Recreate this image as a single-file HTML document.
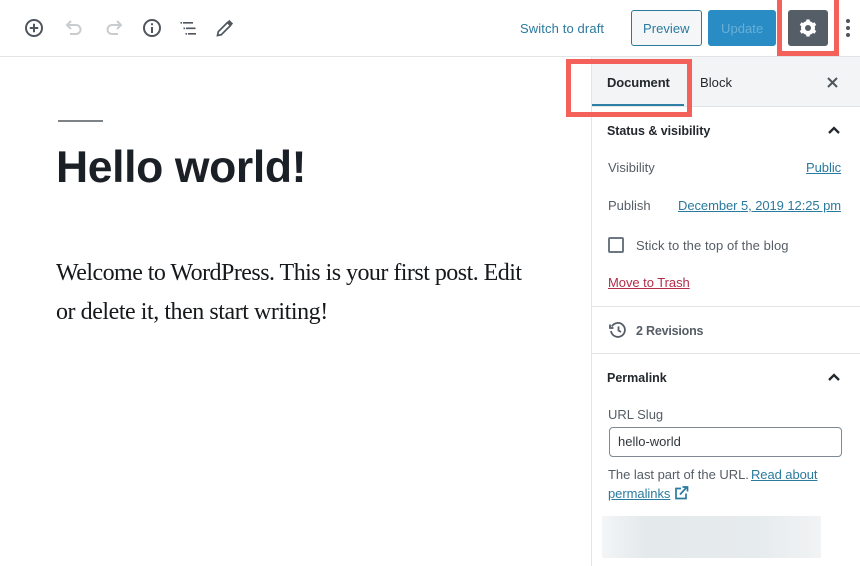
<!DOCTYPE html>
<html><head><meta charset="utf-8">
<style>
html,body{margin:0;padding:0;background:#fff}
#p{position:relative;width:860px;height:566px;overflow:hidden;background:#fff;font-family:"Liberation Sans",sans-serif;font-size:13px;color:#555d66;filter:blur(.3px)}
#p>*{position:absolute}
.t{white-space:nowrap;line-height:16px}
.b{font-weight:bold;color:#23282d}
.l{color:#2a7a9e;text-decoration:underline}
.box{box-sizing:border-box;border:5px solid #f4605a}
svg{overflow:visible}
</style></head><body>
<div id="p">
<div style="left:0;top:56px;width:860px;height:1px;background:#e2e4e7"></div>

<svg style="left:24px;top:18px" width="20" height="20" viewBox="0 0 20 20" fill="none" stroke="#4f565d" stroke-width="2"><circle cx="10" cy="10" r="8"/><path d="M10 5.800v8.400M5.800 10h8.400"/></svg>
<svg style="left:65px;top:20px" width="18" height="16" viewBox="0 0 18 16" fill="none" stroke="#c9cccf" stroke-width="2"><path d="M6 1L2 5l4 4M2 5h9a4.500 4.500 0 0 1 0 9H5"/></svg>
<svg style="left:105px;top:20px" width="18" height="16" viewBox="0 0 18 16" fill="none" stroke="#c9cccf" stroke-width="2"><path d="M12 1l4 4-4 4M16 5H7a4.500 4.500 0 0 0 0 9h6"/></svg>
<svg style="left:142px;top:18px" width="20" height="20" viewBox="0 0 20 20" fill="none" stroke="#4f565d" stroke-width="2"><circle cx="10" cy="10" r="8"/><path d="M10 9v6M10 5.200v2"/></svg>
<svg style="left:180px;top:21px" width="17" height="15" viewBox="0 0 17 15" fill="none" stroke="#4f565d" stroke-width="1.600"><path d="M0.500 1.800h1.500M3 1.800h10M3.500 7.300H5M6 7.300h9.500M5.500 12.800H7M8 12.800h8"/></svg>
<svg style="left:216px;top:20px" width="17" height="17" viewBox="0 0 17 17" fill="none" stroke="#4f565d" stroke-width="1.700"><path d="M1.500 15.500l.8-3.800L11.500 2.500l3 3-9.200 9.200z"/><path d="M12.500 .8l3.700 3.700" stroke-width="2.500"/></svg>

<span class="t" style="left:520px;top:21px;color:#2a7a9e;font-size:13px;letter-spacing:.12px">Switch to draft</span>
<div style="left:631px;top:10px;width:71px;height:36px;box-sizing:border-box;border:1px solid #2a7a9e;border-radius:3px;background:#f4f6f7"></div>
<span class="t" style="left:643px;top:21px;color:#2a7a9e;letter-spacing:.05px">Preview</span>
<div style="left:708px;top:10px;width:68px;height:36px;border-radius:3px;background:#2a8cc4"></div>
<span class="t" style="left:721px;top:21px;color:#66b0d8;letter-spacing:.05px">Update</span>
<div style="left:788px;top:10px;width:40px;height:36px;border-radius:3px;background:#555d66"></div>
<svg style="left:798px;top:18px" width="20" height="20" viewBox="0 0 20 20"><circle cx="10" cy="10" r="5.200" fill="none" stroke="#fff" stroke-width="3.600"/><path d="M10 1.500v17M2.600 5.700l14.800 8.600M2.600 14.300l14.800-8.600" stroke="#fff" stroke-width="3.400"/><circle cx="10" cy="10" r="3" fill="#555d66"/></svg>
<div class="box" style="left:777px;top:-6px;width:62px;height:62px"></div>
<svg style="left:844px;top:18px" width="8" height="20"><circle cx="4" cy="3" r="2" fill="#4f565d"/><circle cx="4" cy="10" r="2" fill="#4f565d"/><circle cx="4" cy="17" r="2" fill="#4f565d"/></svg>

<div style="left:58px;top:120px;width:45px;height:2px;background:#7e8387"></div>
<span class="t" style="left:56px;top:141px;font-size:44.500px;line-height:54px;font-weight:bold;color:#1b2026;letter-spacing:-.38px">Hello world!</span>
<span class="t" style="left:56px;top:258px;font-family:'Liberation Serif',serif;font-size:24px;line-height:30px;color:#16191c;letter-spacing:-.53px">Welcome to WordPress. This is your first post. Edit</span>
<span class="t" style="left:56px;top:297px;font-family:'Liberation Serif',serif;font-size:24px;line-height:30px;color:#16191c;letter-spacing:-.45px">or delete it, then start writing!</span>

<div style="left:591px;top:57px;width:1px;height:509px;background:#e2e4e7"></div>
<div style="left:592px;top:57px;width:268px;height:49px;background:#f3f4f5"></div>
<div style="left:592px;top:106px;width:268px;height:1px;background:#e2e4e7"></div>
<div style="left:592px;top:104px;width:92px;height:2px;background:#2e7ea6"></div>
<span class="t b" style="left:607px;top:75px;letter-spacing:-.1px">Document</span>
<span class="t" style="left:700px;top:75px;color:#23282d;letter-spacing:.05px">Block</span>
<svg style="left:827px;top:77px" width="11" height="11" fill="none" stroke="#4f565d" stroke-width="2"><path d="M1 1l9 9M10 1l-9 9"/></svg>
<div class="box" style="left:566px;top:59px;width:126px;height:58px"></div>

<span class="t b" style="left:607px;top:123px;font-size:12.500px;letter-spacing:-.05px">Status &amp; visibility</span>
<svg class="c" style="left:828px;top:126px" width="12" height="8" fill="none" stroke="#23282d" stroke-width="2.300"><path d="M1 7l5-5 5 5"/></svg>
<span class="t" style="left:608px;top:160px">Visibility</span>
<span class="t l" style="left:806px;top:160px;letter-spacing:-.05px">Public</span>
<span class="t" style="left:608px;top:198px">Publish</span>
<span class="t l" style="left:678px;top:198px;letter-spacing:-.07px">December 5, 2019 12:25 pm</span>
<div style="left:608px;top:237px;width:16px;height:16px;box-sizing:border-box;border:2px solid #6c7781;border-radius:2px"></div>
<span class="t" style="left:636px;top:238px;letter-spacing:.08px">Stick to the top of the blog</span>
<span class="t" style="left:608px;top:275px;color:#b32d4a;text-decoration:underline;letter-spacing:-.05px">Move to Trash</span>
<div style="left:592px;top:306px;width:268px;height:1px;background:#e2e4e7"></div>
<svg style="left:609px;top:322px" width="17" height="16" viewBox="0 0 17 16" fill="none" stroke="#555d66" stroke-width="1.800"><path d="M2.800 4.500A7 7 0 1 1 2 9"/><path d="M1 2.500v3.500h3.500"/><path d="M9.500 4.500V8.500l2.500 1.500"/></svg>
<span class="t" style="left:636px;top:323px;font-weight:bold;font-size:12.500px;letter-spacing:-.2px">2 Revisions</span>
<div style="left:592px;top:353px;width:268px;height:1px;background:#e2e4e7"></div>

<span class="t b" style="left:607px;top:370px;font-size:12.500px">Permalink</span>
<svg style="left:828px;top:373px" width="12" height="8" fill="none" stroke="#23282d" stroke-width="2.300"><path d="M1 7l5-5 5 5"/></svg>
<span class="t" style="left:608px;top:407px">URL Slug</span>
<div style="left:609px;top:427px;width:233px;height:30px;box-sizing:border-box;border:1px solid #7e8993;border-radius:4px;background:#fff"></div>
<span class="t" style="left:618px;top:434px;color:#32373c">hello-world</span>
<span class="t" style="left:608px;top:467px;letter-spacing:-.03px">The last part of the URL.</span>
<span class="t l" style="left:751px;top:467px;letter-spacing:-.08px">Read about</span>
<span class="t l" style="left:608px;top:486px;letter-spacing:-.05px">permalinks</span>
<svg style="left:675px;top:486px" width="13" height="13" fill="none" stroke="#2a7a9e" stroke-width="1.700"><path d="M6 2.500H1v10h10V7.500M5 8.500L11.500 1.500M7.500 1h5v4.500"/></svg>
<div style="left:602px;top:516px;width:219px;height:42px;background:linear-gradient(90deg,#f3f5f6 0%,#e4e9eb 20%,#e6ebed 70%,#f1f3f4 100%)"></div>
</div>
</body></html>
